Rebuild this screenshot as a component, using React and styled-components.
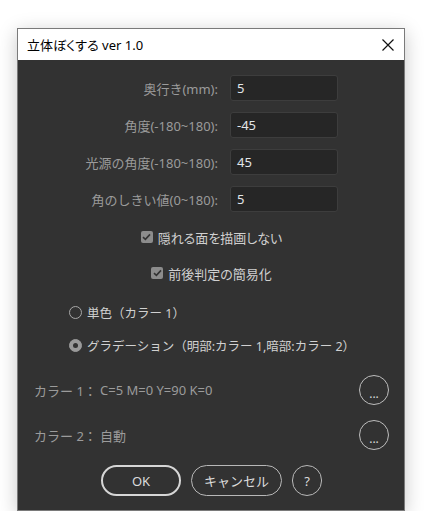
import React from 'react'
import styled, {createGlobalStyle} from 'styled-components'

const Global = createGlobalStyle`
	body {
		margin: 0;
		background: #fff;
		font-family: "Noto Sans", "Noto Sans CJK JP", sans-serif;
	}
`

const Window = styled.div`
	margin: 28px 0 0 17px;
	width: 388px;
	border: 1px solid #7a7a7a;
	box-shadow: 0 4px 18px rgba(0, 0, 0, 0.22);
	box-sizing: border-box;
`

const TitleBar = styled.div`
	height: 31px;
	background: #fff;
	display: flex;
	align-items: center;
	justify-content: space-between;
	padding: 0 9px 0 9px;
	font-size: 13px;
	font-feature-settings: "palt";
	color: #000;
`

const Body = styled.div`
	background: #323232;
	padding: 15px 15px 14px 16px;
	display: flex;
	flex-direction: column;
`

const Fields = styled.div`
	display: grid;
	grid-template-columns: 184px 108px;
	column-gap: 12px;
	row-gap: 11px;
	align-items: center;
`

const Label = styled.label`
	text-align: right;
	font-size: 13px;
	color: #9b9b9b;
	white-space: nowrap;
`

const Input = styled.div`
	height: 26px;
	box-sizing: border-box;
	background: #262626;
	border: 1px solid #3d3d3d;
	border-radius: 3px;
	padding: 0 6px;
	display: flex;
	align-items: center;
	font-size: 13px;
	color: #e2e6ea;
`

const Row = styled.div`
	display: flex;
	align-items: center;
	height: ${p => p.h || 20}px;
	margin-top: ${p => p.mt}px;
	justify-content: ${p => (p.center ? 'center' : 'flex-start')};
	padding-left: ${p => p.indent || 0}px;
	font-size: ${p => p.size || 13}px;
	font-feature-settings: ${p => (p.tight ? '"palt"' : 'normal')};
	color: ${p => p.color || '#d0d0d0'};
	white-space: nowrap;
`

const CheckBox = styled.span`
	width: 12px;
	height: 12px;
	border-radius: 2px;
	background: #8c8c8c;
	display: inline-flex;
	align-items: center;
	justify-content: center;
	margin-right: 5px;
`

const Radio = styled.span`
	width: 13px;
	height: 13px;
	box-sizing: border-box;
	border-radius: 50%;
	border: 1px solid ${p => (p.checked ? '#9a9a9a' : '#a8a8a8')};
	background: ${p => (p.checked ? '#9a9a9a' : 'transparent')};
	display: inline-flex;
	align-items: center;
	justify-content: center;
	margin-right: 5px;

	&::after {
		content: '';
		display: ${p => (p.checked ? 'block' : 'none')};
		width: 5px;
		height: 5px;
		border-radius: 50%;
		background: #333;
	}
`

const ColorLabel = styled.span`
	width: 66px;
	flex: none;
`

const Spacer = styled.span`
	flex: 1;
`

const DotsButton = styled.button`
	width: 30px;
	height: 30px;
	border-radius: 50%;
	border: 1px solid #bdbdbd;
	background: transparent;
	color: #d8d8d8;
	font-family: inherit;
	font-size: 12px;
	padding: 0 0 4px;
	display: flex;
	align-items: flex-end;
	justify-content: center;
	line-height: 1;
`

const Buttons = styled.div`
	display: flex;
	justify-content: center;
	gap: 10px;
	margin-top: 15px;
`

const Button = styled.button`
	height: 31px;
	width: ${p => p.w}px;
	box-sizing: border-box;
	border-radius: 16px;
	border: ${p => (p.primary ? '2px solid #d6d6d6' : '1px solid #b8b8b8')};
	background: transparent;
	color: #dcdcdc;
	font-family: inherit;
	font-size: 13px;
	padding: 0;
`

function Check() {
	return (
		<svg width="9" height="8" viewBox="0 0 9 8">
			<path d="M1 4.2 L3.4 6.4 L8 1.4" fill="none" stroke="#333" strokeWidth="1.6" />
		</svg>
	)
}

function CloseIcon() {
	return (
		<svg width="14" height="14" viewBox="0 0 14 14">
			<path d="M1.5 1.5 L12.5 12.5 M12.5 1.5 L1.5 12.5" stroke="#111" strokeWidth="1.2" />
		</svg>
	)
}

const fields = [
	['奥行き(mm):', '5'],
	['角度(-180~180):', '-45'],
	['光源の角度(-180~180):', '45'],
	['角のしきい値(0~180):', '5'],
]

export default function App() {
	return (
		<>
			<Global />
			<Window>
				<TitleBar>
					<span>立体ぼくする ver 1.0</span>
					<CloseIcon />
				</TitleBar>
				<Body>
					<Fields>
						{fields.map(([label, value]) => (
							<React.Fragment key={label}>
								<Label>{label}</Label>
								<Input>{value}</Input>
							</React.Fragment>
						))}
					</Fields>
					<Row center tight mt={15}>
						<CheckBox><Check /></CheckBox>
						隠れる面を描画しない
					</Row>
					<Row center tight mt={16}>
						<CheckBox><Check /></CheckBox>
						前後判定の簡易化
					</Row>
					<Row indent={35} size={12.5} mt={19}>
						<Radio />
						単色（カラー 1）
					</Row>
					<Row indent={35} size={12.5} mt={13}>
						<Radio checked />
						グラデーション（明部:カラー 1,暗部:カラー 2）
					</Row>
					<Row h={30} mt={20} color="#9b9b9b">
						<ColorLabel>カラー 1：</ColorLabel>
						C=5 M=0 Y=90 K=0
						<Spacer />
						<DotsButton>...</DotsButton>
					</Row>
					<Row h={30} mt={15} color="#9b9b9b">
						<ColorLabel>カラー 2：</ColorLabel>
						自動
						<Spacer />
						<DotsButton>...</DotsButton>
					</Row>
					<Buttons>
						<Button primary w={80}>OK</Button>
						<Button w={91}>キャンセル</Button>
						<Button w={30}>?</Button>
					</Buttons>
				</Body>
			</Window>
		</>
	)
}
